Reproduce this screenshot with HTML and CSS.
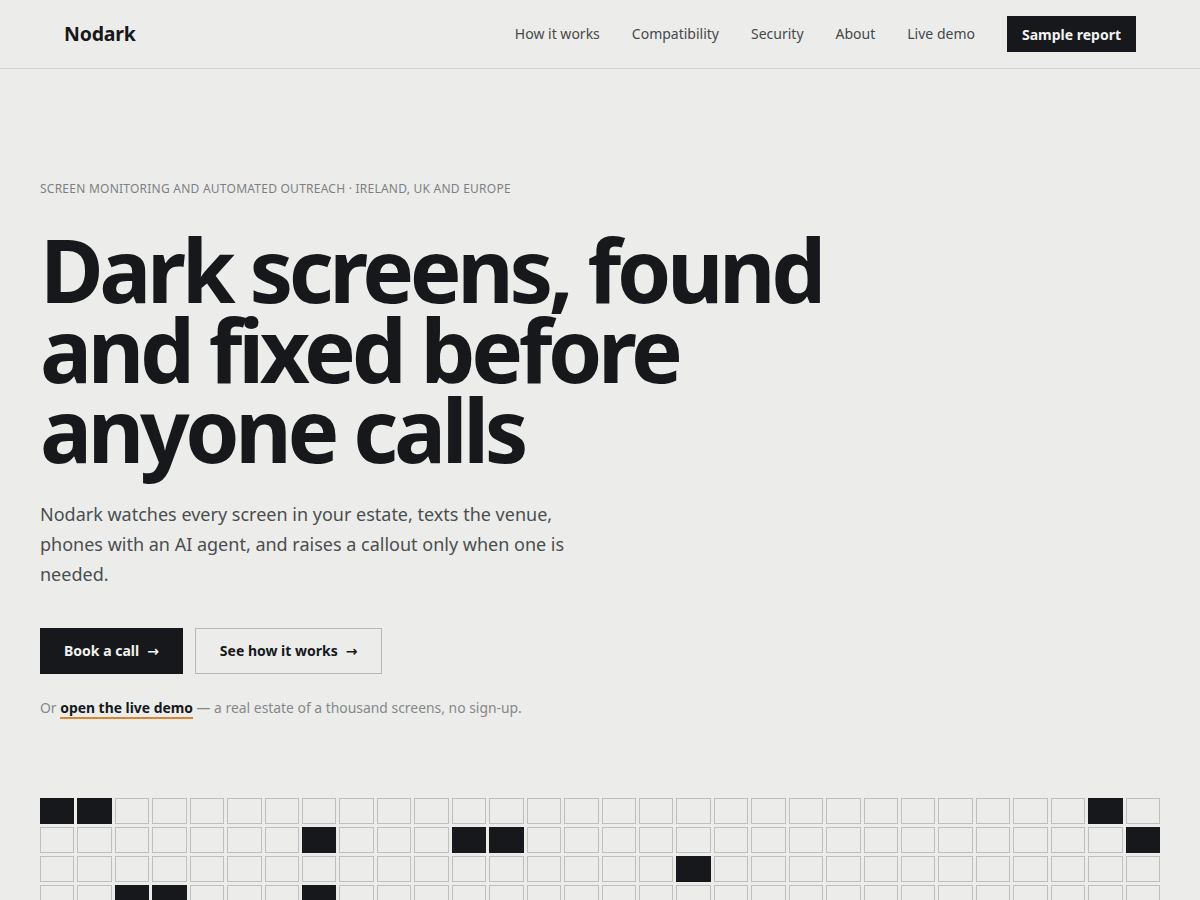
FILE: index.html
```html
<!DOCTYPE html>
<html lang="en">
<head>
<meta charset="utf-8">
<title>Nodark — Dark screens, found and fixed</title>
<link rel="stylesheet" href="styles.css">
</head>
<body>
<header class="site-header">
  <a class="logo" href="#">Nodark</a>
  <nav class="nav">
    <a class="nav-link" href="#">How it works</a>
    <a class="nav-link" href="#">Compatibility</a>
    <a class="nav-link" href="#">Security</a>
    <a class="nav-link" href="#">About</a>
    <a class="nav-link" href="#">Live demo</a>
    <a class="nav-cta" href="#">Sample report</a>
  </nav>
</header>
<main class="hero">
  <p class="eyebrow">Screen monitoring and automated outreach · Ireland, UK and Europe</p>
  <h1 class="headline">Dark screens, found and fixed before anyone calls</h1>
  <p class="lede">Nodark watches every screen in your estate, texts the venue, phones with an AI agent, and raises a callout only when one is needed.</p>
  <div class="actions">
    <a class="btn btn-primary" href="#">Book a call <span class="arrow">→</span></a>
    <a class="btn btn-secondary" href="#">See how it works <span class="arrow">→</span></a>
  </div>
  <p class="note">Or <a class="note-link" href="#">open the live demo</a> — a real estate of a thousand screens, no sign-up.</p>
  <div class="screens" id="screens"></div>
</main>
<script src="script.js"></script>
</body>
</html>
```
FILE: styles.css
```css
* { box-sizing: border-box; }
html, body { margin: 0; padding: 0; }
body {
  background: #ecedea;
  color: #16181b;
  font-family: "Noto Sans", "Open Sans", sans-serif;
}
a { color: inherit; text-decoration: none; }

.site-header {
  height: 69px;
  border-bottom: 1px solid #d3d4d1;
  display: flex;
  align-items: center;
  justify-content: space-between;
  padding: 0 64px;
}
.logo {
  font-size: 19.5px;
  font-weight: 700;
  letter-spacing: -0.01em;
  color: #16181b;
  line-height: 1;
}
.nav {
  display: flex;
  align-items: center;
  gap: 32px;
}
.nav-link {
  font-size: 14px;
  color: #45484b;
  line-height: 1;
}
.nav-cta {
  background: #16181b;
  color: #f2f2f0;
  font-size: 14px;
  font-weight: 700;
  height: 36px;
  padding: 0 15px;
  display: flex;
  align-items: center;
}

.hero {
  padding: 112px 40px 0;
}
.eyebrow {
  margin: 0;
  font-size: 12px;
  line-height: 16px;
  text-transform: uppercase;
  color: #7d8083;
  letter-spacing: 0.02em;
}
.headline {
  margin: 32px 0 0;
  font-size: 87px;
  line-height: 80px;
  font-weight: 700;
  letter-spacing: -0.05em;
  max-width: 820px;
  color: #16181b;
}
.lede {
  margin: 30px 0 0;
  font-size: 18px;
  line-height: 30px;
  color: #4a4d50;
  max-width: 540px;
}
.actions {
  margin-top: 39px;
  display: flex;
  gap: 12px;
}
.btn {
  height: 46px;
  padding: 0 24px;
  display: flex;
  align-items: center;
  gap: 8px;
  font-size: 14px;
  font-weight: 700;
  line-height: 1;
}
.btn-primary {
  background: #16181b;
  color: #f2f2f0;
}
.btn-secondary {
  border: 1px solid #b6b8b6;
  color: #16181b;
}
.arrow {
  font-family: "DejaVu Sans", sans-serif;
  font-weight: 700;
  font-size: 14px;
}
.note {
  margin: 23px 0 0;
  font-size: 13.9px;
  line-height: 22px;
  color: #85888a;
}
.note-link {
  color: #16181b;
  font-weight: 700;
  border-bottom: 2px solid #d9862e;
}
.screens {
  margin-top: 79px;
  display: grid;
  grid-template-columns: repeat(30, 1fr);
  gap: 3px;
}
.cell {
  height: 26px;
  border: 1px solid #bfc0be;
}
.cell.dark {
  background: #16181b;
  border-color: #16181b;
}
```
FILE: script.js
```js
(function () {
  var dark = {
    0: [0, 1, 28],
    1: [7, 11, 12, 29],
    2: [17],
    3: [2, 3, 7],
    4: [14, 22],
    5: [5, 25]
  };
  var grid = document.getElementById('screens');
  for (var r = 0; r < 6; r++) {
    for (var c = 0; c < 30; c++) {
      var d = document.createElement('div');
      d.className = 'cell' + ((dark[r] || []).indexOf(c) >= 0 ? ' dark' : '');
      grid.appendChild(d);
    }
  }
})();
```
